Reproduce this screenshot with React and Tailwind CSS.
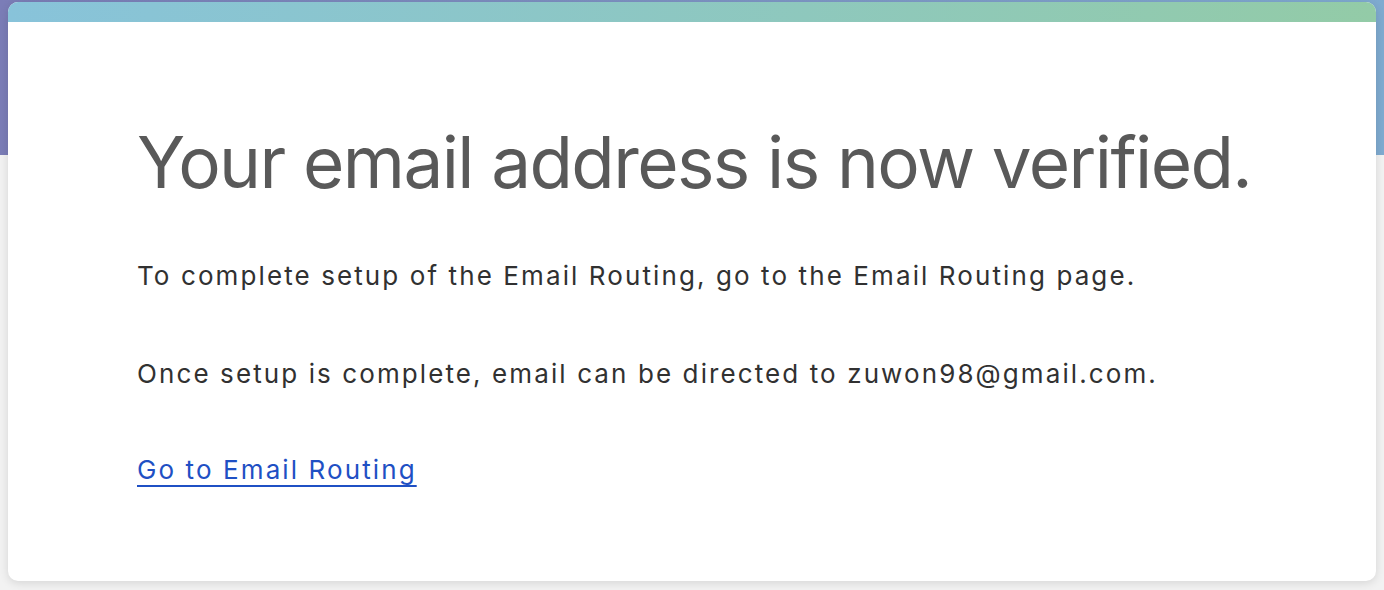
export default function App() {
  return (
    <div className="relative w-[1384px] h-[590px] overflow-hidden bg-[#f2f2f2]" style={{ fontFamily: "Inter, 'Noto Sans', sans-serif" }}>
      <div className="absolute inset-x-0 top-0 h-[155px] bg-gradient-to-r from-[#7b7db7] to-[#7fabd0]" />
      <div className="relative mx-[8px] mt-[2px] h-[579px] rounded-[10px] bg-white shadow-[0_2px_10px_rgba(0,0,0,0.12)] overflow-hidden flex flex-col">
        <div className="h-[20px] bg-gradient-to-r from-[#88c3da] to-[#93cba7]" />
        <div className="pl-[129px] pt-[95px]">
          <h1 className="text-[71px] leading-[90px] text-[#595959] font-normal tracking-[-1.6px] whitespace-nowrap">Your email address is now verified.</h1>
          <p className="mt-[53px] text-[26px] leading-[32px] text-[#313131] tracking-[2.1px] whitespace-nowrap">To complete setup of the Email Routing, go to the Email Routing page.</p>
          <p className="mt-[66px] text-[26px] leading-[32px] text-[#313131] tracking-[2.1px] whitespace-nowrap">Once setup is complete, email can be directed to zuwon98@gmail.com.</p>
          <a href="#" className="mt-[64px] inline-block text-[26px] leading-[32px] text-[#1f50c4] tracking-[2.1px] underline decoration-2 underline-offset-[6px]">Go to Email Routing</a>
        </div>
      </div>
    </div>
  );
}
